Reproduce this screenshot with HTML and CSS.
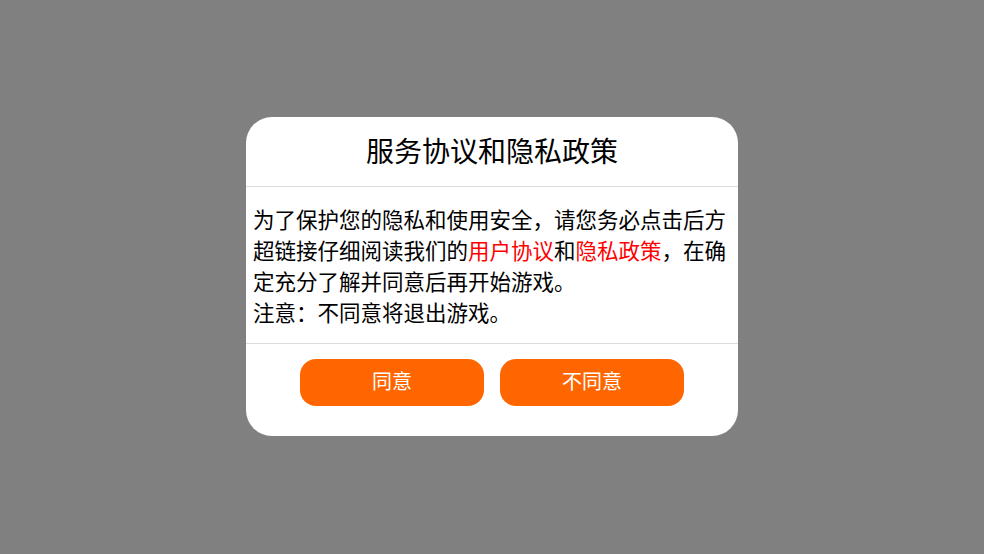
FILE: index.html
```html
<!DOCTYPE html>
<html lang="zh-CN">

<head>
    <meta charset="UTF-8">
    <meta name="viewport" content="width=device-width, initial-scale=1.0">
    <title>服务协议和隐私政策</title>
    <link rel="stylesheet" href="styles.css">
</head>

<body>

<div class="mask">
    <div class="dialog">
        <div class="dialog-title">服务协议和隐私政策</div>
        <div class="dialog-body">
            <p>为了保护您的隐私和使用安全，请您务必点击后方超链接仔细阅读我们的<a href="#">用户协议</a>和<a href="#">隐私政策</a>，在确定充分了解并同意后再开始游戏。</p>
            <p>注意：不同意将退出游戏。</p>
        </div>
        <div class="dialog-footer">
            <button class="btn">同意</button>
            <button class="btn">不同意</button>
        </div>
    </div>
</div>

</body>

</html>
```

FILE: styles.css
```css
html, body {
    margin: 0;
    padding: 0;
    height: 100%;
    overflow: hidden;
}

body {
    background-color: #808080;
    font-family: "Noto Sans CJK SC", "Noto Sans", sans-serif;
}

.mask {
    height: 100%;
    display: flex;
    align-items: center;
    justify-content: center;
}

.dialog {
    width: 492px;
    background-color: white;
    border-radius: 26px;
    overflow: hidden;
    margin-bottom: 1px;
}

.dialog-title {
    height: 69px;
    line-height: 66px;
    text-align: center;
    font-size: 28px;
    color: #000;
    border-bottom: 1px solid #dcdcdc;
}

.dialog-body {
    padding: 16px 7px 16px 7px;
    font-size: 21.5px;
    line-height: 31px;
    color: #000;
}

.dialog-body p {
    margin: 0;
}

.dialog-body a {
    color: #ff0000;
    text-decoration: none;
}

.dialog-footer {
    border-top: 1px solid #dcdcdc;
    display: flex;
    justify-content: center;
    gap: 16px;
    padding: 15px 0 30px 0;
}

.btn {
    width: 184px;
    height: 47px;
    border: none;
    border-radius: 16px;
    background-color: #ff6600;
    color: white;
    font-family: inherit;
    font-size: 20px;
    line-height: 43px;
    padding: 0 0 4px 0;
}
```
